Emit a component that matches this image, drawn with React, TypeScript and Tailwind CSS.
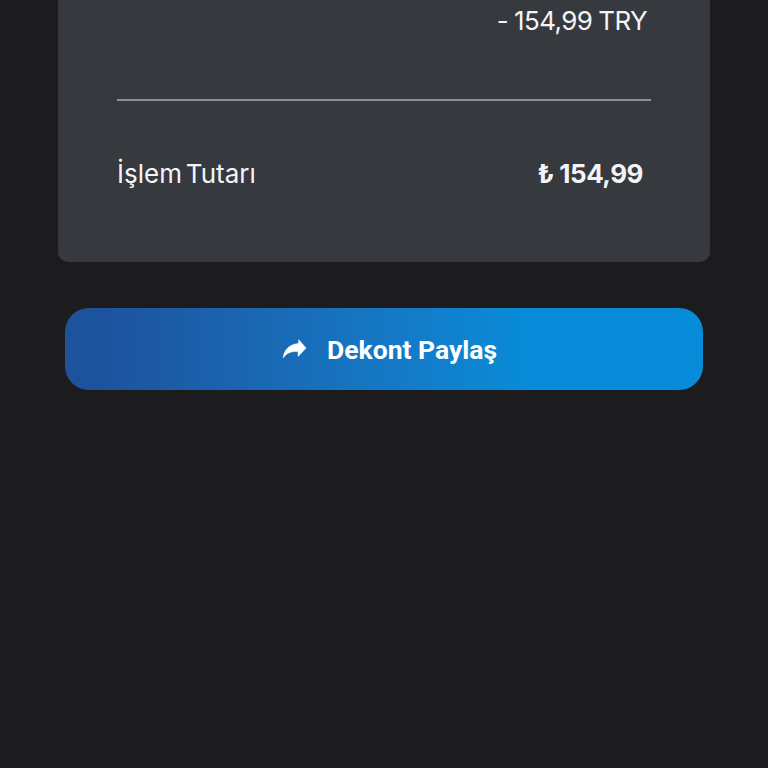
import React from 'react';

function ShareIcon() {
  return (
    <svg viewBox="0 0 24 24" className="mb-[2px] h-[31px] w-[31px] shrink-0 fill-white stroke-white stroke-[0.4]" strokeLinejoin="round" aria-hidden="true">
      <path d="M21 11.6L15.2 5.2v2.9C8 8.6 3.9 13 3.2 19.4c2.6-3.9 6.3-5.5 11.6-5v3.7L21 11.6z" />
    </svg>
  );
}

export default function App() {
  return (
    <main className="flex h-screen flex-col overflow-hidden bg-[#1c1c1e] font-['Inter','Noto_Sans',sans-serif] text-[26px] leading-[32px] text-[#f4f4f8]">
      <section className="ml-[58px] flex h-[262px] w-[652px] flex-col rounded-b-[10px] bg-[#36393e] pr-[59px] pl-[59px]">
        <div className="flex justify-end pt-[5px] pr-[4px]">
          <span className="whitespace-nowrap tracking-[-0.6px] [word-spacing:-0.8px]">- 154,99 TRY</span>
        </div>
        <hr className="mt-[62px] h-[2px] border-0 bg-[#8f9095]" />
        <div className="mt-[57px] flex items-center justify-between pr-[8px]">
          <span className="whitespace-nowrap tracking-[0px] [word-spacing:-3.4px]">İşlem Tutarı</span>
          <span className="whitespace-nowrap font-bold tracking-[-0.5px]">₺ 154,99</span>
        </div>
      </section>
      <button className="mt-[46px] ml-[65px] flex h-[82px] w-[638px] items-center rounded-[24px] bg-linear-to-r from-[#1d529d] from-5% to-[#078cd9] to-73% pl-[214px] font-['Roboto','Noto_Sans',sans-serif] text-[26.5px] font-bold text-white">
        <ShareIcon />
        <span className="mt-[2px] ml-[17px] whitespace-nowrap">Dekont Paylaş</span>
      </button>
    </main>
  );
}
